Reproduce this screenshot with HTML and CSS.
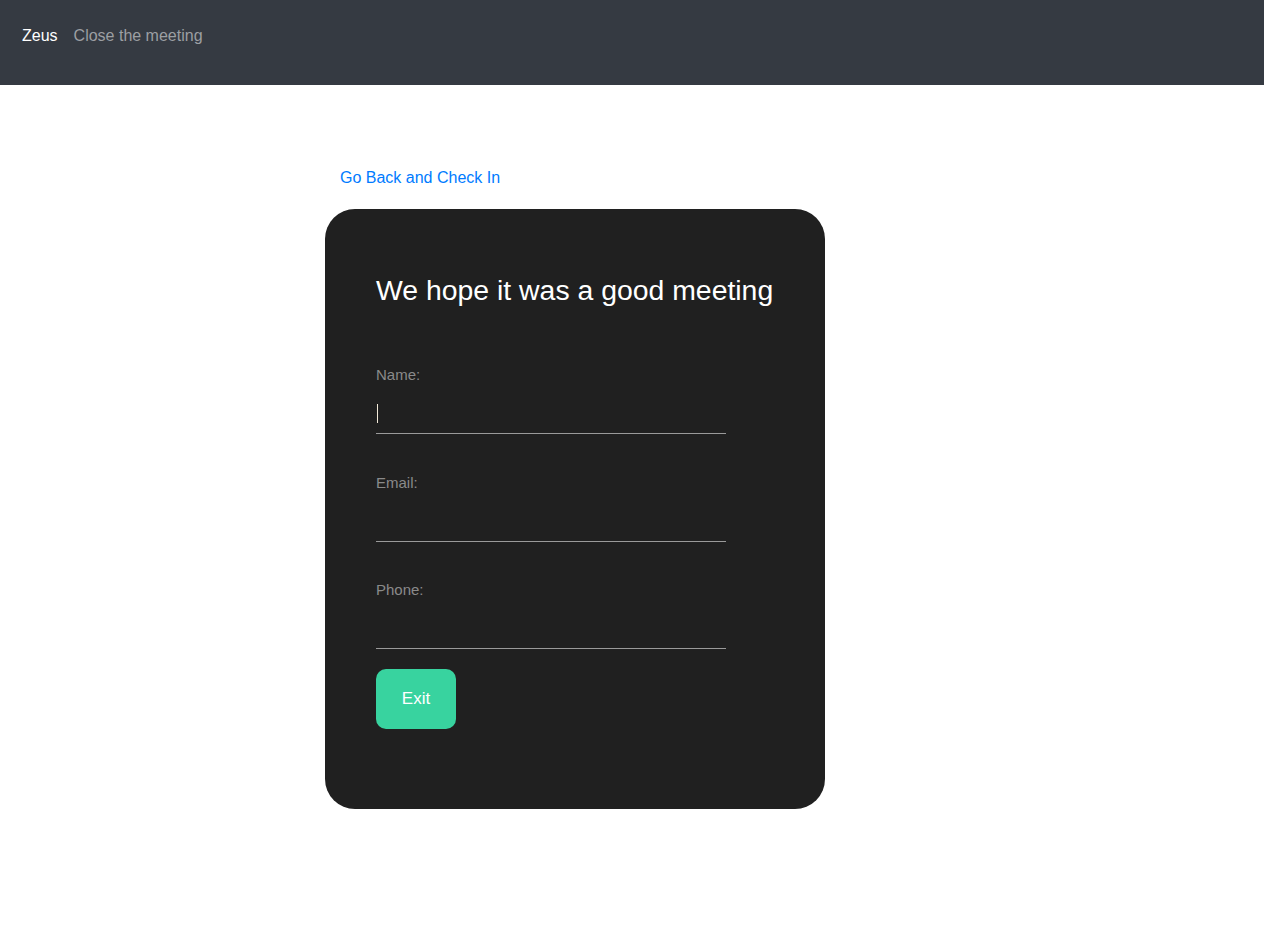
FILE: index.html
```html
<!DOCTYPE html>
<html>
<head>
<meta charset="utf-8">
<link rel="stylesheet" href="styles.css">
</head>
<body>
<nav class="navbar">
  <a class="brand" href="#">Zeus</a>
  <a class="nav-link" href="#">Close the meeting</a>
</nav>
<main class="main">
  <a class="back-link" href="#">Go Back and Check In</a>
  <div class="card">
    <h2 class="title">We hope it was a good meeting</h2>
    <form class="form">
      <div class="field">
        <label class="label">Name:</label>
        <div class="input focused"><span class="caret"></span></div>
      </div>
      <div class="field">
        <label class="label">Email:</label>
        <div class="input"></div>
      </div>
      <div class="field last">
        <label class="label">Phone:</label>
        <div class="input"></div>
      </div>
      <button type="button" class="btn">Exit</button>
    </form>
  </div>
</main>
</body>
</html>
```

FILE: styles.css
```css
* { box-sizing: border-box; }
html, body { margin: 0; padding: 0; }
body {
  font-family: "Liberation Sans", Arial, sans-serif;
  background: #ffffff;
  color: #212529;
}
.navbar {
  height: 85px;
  background: #353a42;
  display: flex;
  align-items: flex-start;
  padding: 27px 22px 0;
  gap: 16px;
}
.navbar a {
  text-decoration: none;
  font-size: 16px;
  line-height: 18px;
}
.brand { color: #ffffff; }
.nav-link { color: #9c9fa3; }
.main {
  padding: 84px 0 0 325px;
}
.back-link {
  display: block;
  margin-left: 15px;
  color: #007bff;
  text-decoration: none;
  font-size: 16px;
  line-height: 18px;
}
.card {
  margin-top: 22px;
  width: 500px;
  height: 600px;
  background: #202020;
  border-radius: 30px;
  padding: 64px 51px 0;
}
.title {
  margin: 0;
  font-weight: normal;
  font-size: 28.4px;
  line-height: 34px;
  color: #ffffff;
  white-space: nowrap;
}
.form {
  margin-top: 59.25px;
  display: flex;
  flex-direction: column;
  align-items: flex-start;
}
.field {
  width: 350px;
  margin-bottom: 39.5px;
}
.field.last { margin-bottom: 19.75px; }
.label {
  display: block;
  font-size: 15px;
  line-height: 18px;
  color: #8a8a8a;
}
.input {
  margin-top: 9px;
  height: 41px;
  border-bottom: 1px solid #9a9a9a;
  display: flex;
  align-items: center;
  padding-top: 1px;
}
.caret {
  display: block;
  width: 1px;
  height: 19px;
  background: #f2e9d8;
  margin-left: 1px;
}
.btn {
  width: 80px;
  height: 60px;
  border: none;
  border-radius: 10px;
  background: #38d39f;
  color: #ffffff;
  font-family: "Liberation Sans", Arial, sans-serif;
  font-size: 17px;
  padding: 0;
}
```
